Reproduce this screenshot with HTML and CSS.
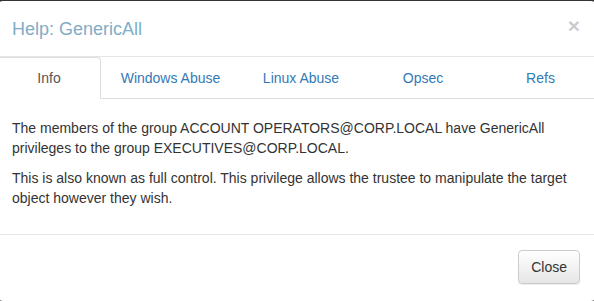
FILE: index.html
```html
<!DOCTYPE html>
<html lang="en">
<head>
  <meta charset="UTF-8" />
  <title>Help: GenericAll</title>
  <link rel="stylesheet" href="styles.css">
</head>
<body>

<div class="modal">
  <!-- Header -->
  <div class="modal-header">
    <h4 class="modal-title">Help: GenericAll</h4>
    <span class="close">&times;</span>
  </div>

  <!-- Tabs -->
  <ul class="tabs">
    <li class="active" style="flex-basis: 104px">Info</li>
    <li style="flex-basis: 139px">Windows Abuse</li>
    <li style="flex-basis: 122px">Linux Abuse</li>
    <li style="flex-basis: 122px">Opsec</li>
    <li style="flex-basis: 113px">Refs</li>
  </ul>

  <div class="modal-body">
    <p>The members of the group ACCOUNT OPERATORS@CORP.LOCAL have GenericAll privileges to the group EXECUTIVES@CORP.LOCAL.</p>
    <p>This is also known as full control. This privilege allows the trustee to manipulate the target object however they wish.</p>
  </div>

  <div class="modal-footer">
    <button class="btn">Close</button>
  </div>
</div>

</body>
</html>
```

FILE: styles.css
```css
* {
  box-sizing: border-box;
  margin: 0;
  padding: 0;
}

body {
  font-family: "Liberation Sans", Arial, sans-serif;
  font-size: 14px;
  line-height: 20px;
  color: #333;
  background: #333;
  overflow: hidden;
  padding-top: 1px;
}

.modal {
  width: 600px;
  margin-left: -3px;
  background: #fff;
  border-radius: 6px;
}

.modal-header {
  display: flex;
  justify-content: space-between;
  align-items: center;
  padding: 15px;
  height: 56px;
  border-bottom: 1px solid #e5e5e5;
}

.modal-title {
  font-size: 18px;
  font-weight: normal;
  color: #7fadc6;
  line-height: 26px;
}

.close {
  font-size: 21px;
  font-weight: bold;
  color: #000;
  opacity: 0.2;
  line-height: 1;
  margin-top: -6px;
  margin-right: 2px;
}

.tabs {
  display: flex;
  list-style: none;
  border-bottom: 1px solid #ddd;
}

.tabs li {
  flex-grow: 0;
  flex-shrink: 0;
  text-align: center;
  padding: 10px 0;
  color: #337ab7;
  border: 1px solid transparent;
  border-bottom: 1px solid #ddd;
  margin-bottom: -1px;
  border-radius: 4px 4px 0 0;
}

.tabs li.active {
  color: #555;
  border-color: #ddd;
  border-bottom-color: #fff;
}

.modal-body {
  padding: 19px 15px 16px;
}

.modal-body p {
  margin-bottom: 10px;
}

.modal-footer {
  padding: 15px 17px 17px 15px;
  text-align: right;
  border-top: 1px solid #e5e5e5;
}

.btn {
  font-family: inherit;
  font-size: 14px;
  line-height: 20px;
  padding: 6px 12px;
  color: #333;
  border: 1px solid #ccc;
  border-radius: 4px;
  background: linear-gradient(to bottom, #fff 0%, #e6e6e6 100%);
  box-shadow: inset 0 1px 0 rgba(255,255,255,.15), 0 1px 1px rgba(0,0,0,.075);
}
```
